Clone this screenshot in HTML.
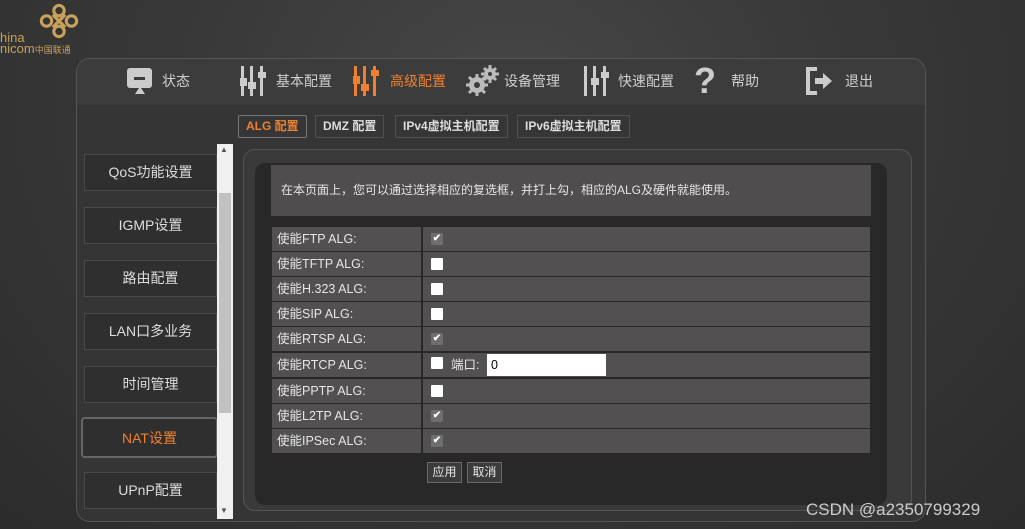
<!DOCTYPE html>
<html><head><meta charset="utf-8"><style>
*{margin:0;padding:0;box-sizing:border-box}
body{width:1025px;height:529px;overflow:hidden;background:radial-gradient(ellipse at 50% 20%,#474747 0%,#3a3a3a 40%,#2c2c2c 100%);font-family:"Liberation Sans","Noto Sans CJK SC",sans-serif;color:#e6e6e6;position:relative}
.a{position:absolute}
.panel{left:76px;top:58px;width:850px;height:464px;border:1px solid #555;border-radius:14px;background:#353535}
.nav{left:77px;top:59px;width:848px;height:46px;background:#3c3c3c;border-radius:13px 13px 0 0}
.ni{font-size:14px;color:#cfcfcf;top:71px}
.tab{top:115px;height:23px;border:1px solid #505050;font-size:12px;font-weight:bold;line-height:21px;padding:0 7px;background:#363636;color:#ddd}
.sb{left:84px;width:133px;height:37px;border:1px solid #4a4a4a;background:#2f2f2f;text-align:center;line-height:35px;font-size:14px;color:#ddd}
.row{left:272px;width:598px;height:24px;background:#525050;font-size:12.5px;line-height:24px}
.row span{position:absolute;left:5px}
.row i{position:absolute;left:149px;top:0;width:2px;height:24px;background:#2a2a2a}
.cb{position:absolute;left:159px;top:6px;width:12px;height:12px;background:#fff;border-radius:1px}
.ck{background:#6e6e6e;color:#fff;font-size:10px;line-height:12px;text-align:center;font-style:normal}
.btn{top:462px;height:21px;border:1px solid #6a6a6a;background:#3b3b3b;font-size:12px;line-height:19px;text-align:center;width:35px}
</style></head><body>
<svg class="a" style="left:32px;top:2px" width="54" height="38" viewBox="0 0 52 36"><g fill="none" stroke="#c8a15a" stroke-width="3"><circle cx="26" cy="8" r="5"/><circle cx="14" cy="18" r="5"/><circle cx="38" cy="18" r="5"/><circle cx="26" cy="28" r="5"/><path d="M20 12 L32 24 M32 12 L20 24"/></g></svg>
<div class="a" style="left:0;top:32px;font-size:13px;color:#c8a15a;line-height:11px">hina<br>nicom<span style="font-size:9px">中国联通</span></div>
<div class="a panel"></div>
<div class="a nav"></div>
<svg class="a" style="left:126px;top:67px" width="28" height="28"><rect x="1" y="1" width="25" height="20" rx="3" fill="#ccc"/><rect x="8" y="10" width="11" height="3" fill="#3c3c3c"/><path d="M9 27 L13 21 L15 21 L19 27Z" fill="#ccc"/></svg>
<div class="a ni" style="left:162px">状态</div>
<svg class="a" style="left:240px;top:64px" width="28" height="34"><g fill="#ccc"><rect x="1" y="2" width="3" height="30"/><rect x="10" y="2" width="3" height="30"/><rect x="20" y="2" width="3" height="30"/><rect x="-1" y="14" width="8" height="8"/><rect x="18" y="8" width="8" height="6"/><rect x="8" y="18" width="8" height="7"/></g></svg>
<div class="a ni" style="left:276px">基本配置</div>
<svg class="a" style="left:353px;top:64px" width="28" height="34"><g fill="#f08030"><rect x="1" y="2" width="3" height="30"/><rect x="10" y="2" width="3" height="30"/><rect x="20" y="2" width="3" height="30"/><rect x="-1" y="12" width="8" height="8"/><rect x="18" y="6" width="8" height="6"/><rect x="8" y="20" width="8" height="7"/></g></svg>
<div class="a ni" style="left:390px;color:#f08030">高级配置</div>
<svg class="a" style="left:466px;top:64px" width="34" height="34"><g fill="#bbb"><circle cx="11" cy="21" r="8"/><circle cx="24" cy="10" r="6"/></g><circle cx="11" cy="21" r="3" fill="#3c3c3c"/><circle cx="24" cy="10" r="2" fill="#3c3c3c"/><g stroke="#bbb" stroke-width="3"><path d="M11 10V32M0 21H22M3 13L19 29M19 13L3 29"/><path d="M24 1V19M15 10H33M18 4L30 16M30 4L18 16"/></g><circle cx="11" cy="21" r="3" fill="#3c3c3c"/><circle cx="24" cy="10" r="2" fill="#3c3c3c"/></svg>
<div class="a ni" style="left:504px">设备管理</div>
<svg class="a" style="left:583px;top:64px" width="28" height="34"><g fill="#ccc"><rect x="1" y="2" width="3" height="30"/><rect x="10" y="2" width="3" height="30"/><rect x="20" y="2" width="3" height="30"/><rect x="8" y="14" width="8" height="7"/><rect x="18" y="8" width="8" height="6"/></g></svg>
<div class="a ni" style="left:618px">快速配置</div>
<div class="a" style="left:694px;top:60px;font-size:36px;font-weight:bold;color:#ccc">?</div>
<div class="a ni" style="left:731px">帮助</div>
<svg class="a" style="left:805px;top:66px" width="30" height="30"><path d="M12 3 H3 V27 H12" fill="none" stroke="#ccc" stroke-width="4"/><path d="M10 12 H18 V7 L27 15 L18 23 V18 H10Z" fill="#ccc"/></svg>
<div class="a ni" style="left:845px">退出</div>
<div class="a tab" style="left:238px;color:#f08030;border-color:#777;border-radius:2px">ALG 配置</div>
<div class="a tab" style="left:315px">DMZ 配置</div>
<div class="a tab" style="left:395px">IPv4虚拟主机配置</div>
<div class="a tab" style="left:517px">IPv6虚拟主机配置</div>
<div class="a sb" style="top:154px">QoS功能设置</div>
<div class="a sb" style="top:207px">IGMP设置</div>
<div class="a sb" style="top:260px">路由配置</div>
<div class="a sb" style="top:313px">LAN口多业务</div>
<div class="a sb" style="top:366px">时间管理</div>
<div class="a sb" style="left:81px;width:137px;top:417px;height:41px;line-height:39px;border:2px solid #666;border-radius:4px;color:#f08030">NAT设置</div>
<div class="a sb" style="top:472px">UPnP配置</div>
<div class="a" style="left:217px;top:144px;width:16px;height:375px;background:#f0f0f0"></div>
<div class="a" style="left:219px;top:193px;width:12px;height:220px;background:#c1c1c1"></div>
<div class="a" style="left:220px;top:145px;font-size:8px;color:#555">▲</div>
<div class="a" style="left:220px;top:506px;font-size:8px;color:#555">▼</div>
<div class="a" style="left:243px;top:149px;width:669px;height:362px;border:1px solid #555;border-radius:12px;background:#3a3a3a"></div>
<div class="a" style="left:255px;top:163px;width:632px;height:342px;border-radius:10px;background:#282828"></div>
<div class="a" style="left:271px;top:165px;width:600px;height:51px;background:#4f4d4d;font-size:12px;line-height:50px;padding-left:10px">在本页面上，您可以通过选择相应的复选框，并打上勾，相应的ALG及硬件就能使用。</div>
<div class="a row" style="top:227px"><span>使能FTP ALG:</span><i></i><b class="cb ck">✔</b></div>
<div class="a row" style="top:252px"><span>使能TFTP ALG:</span><i></i><b class="cb"></b></div>
<div class="a row" style="top:277px"><span>使能H.323 ALG:</span><i></i><b class="cb"></b></div>
<div class="a row" style="top:302px"><span>使能SIP ALG:</span><i></i><b class="cb"></b></div>
<div class="a row" style="top:327px"><span>使能RTSP ALG:</span><i></i><b class="cb ck">✔</b></div>
<div class="a row" style="top:353px"><span>使能RTCP ALG:</span><i></i><b class="cb" style="top:4px"></b><span style="left:179px">端口:</span><div class="a" style="left:215px;top:1px;width:119px;height:22px;background:#fff;color:#000;line-height:22px;padding-left:4px">0</div></div>
<div class="a row" style="top:379px"><span>使能PPTP ALG:</span><i></i><b class="cb"></b></div>
<div class="a row" style="top:404px"><span>使能L2TP ALG:</span><i></i><b class="cb ck">✔</b></div>
<div class="a row" style="top:429px"><span>使能IPSec ALG:</span><i></i><b class="cb ck">✔</b></div>
<div class="a btn" style="left:427px">应用</div>
<div class="a btn" style="left:467px">取消</div>
<div class="a" style="left:806px;top:500px;font-size:17px;color:#ccc">CSDN @a2350799329</div>
</body></html>
